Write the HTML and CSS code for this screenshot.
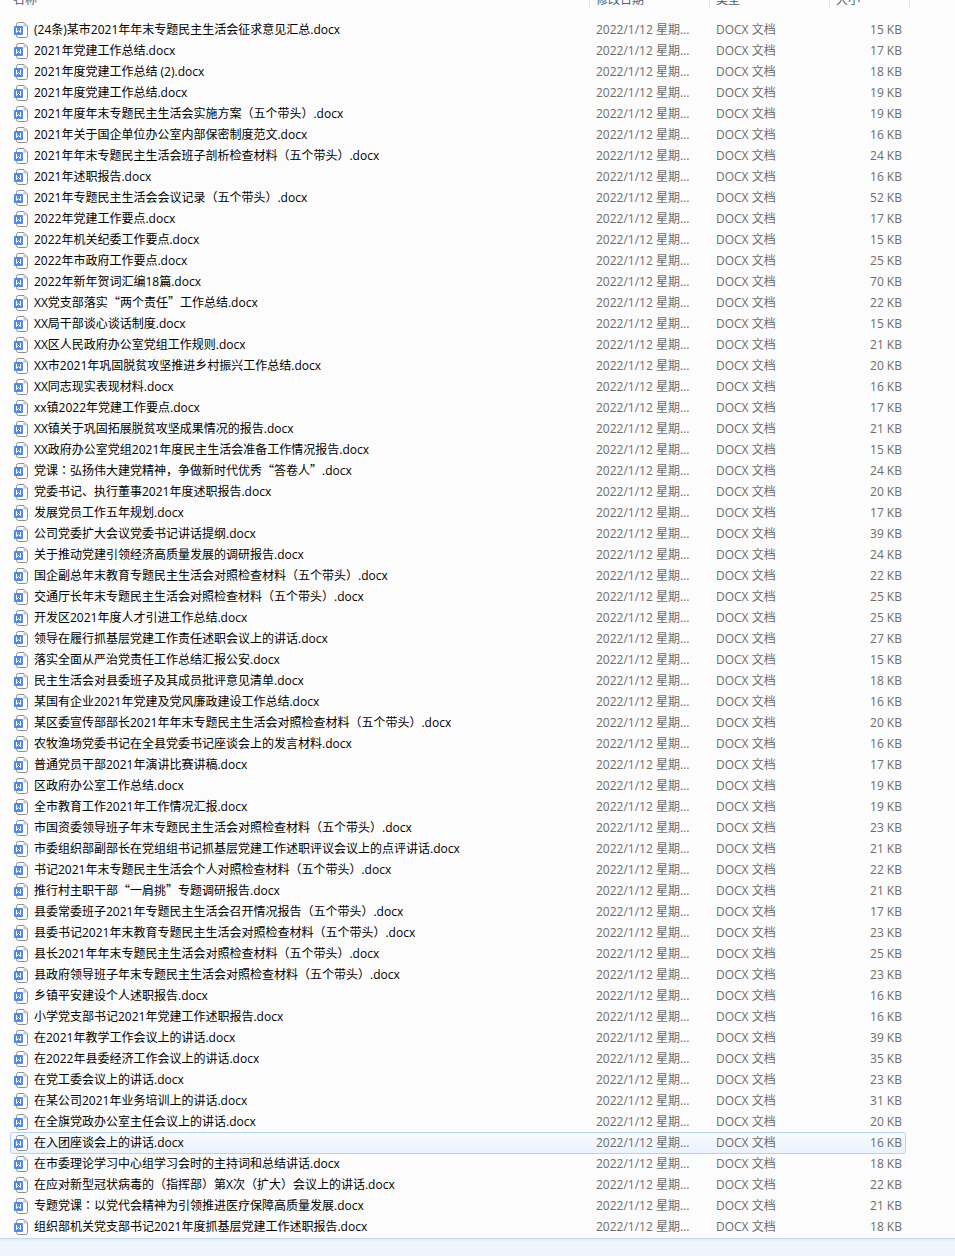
FILE: index.html
```html
<!DOCTYPE html>
<html lang="zh-CN">
<head>
  <meta charset="UTF-8">
  <meta name="viewport" content="width=device-width, initial-scale=1.0">
  <title>文件列表</title>
  <link rel="stylesheet" href="styles.css">
</head>
<body>
<svg class="sprite" aria-hidden="true">
  <symbol id="docx" viewBox="0 0 14 16">
    <path d="M4.500 .5H10L13.500 4v9.500a2 2 0 0 1-2 2h-7a2 2 0 0 1-2-2v-11a2 2 0 0 1 2-2z" fill="#fff" stroke="#8e8e8e"/>
    <path d="M9.500 1v3.500H13z" fill="#c4c4c4"/>
    <rect x="0" y="4" width="9" height="9" rx="1" fill="#4f8af0"/>
    <path d="M2.500 6v4.500L4.500 8.500l2 2V6" fill="none" stroke="#fff"/>
  </symbol>
</svg>
<main class="pane">
  <table class="files">
    <colgroup>
      <col>
      <col class="col-date">
      <col class="col-type">
      <col class="col-size">
      <col class="col-end">
    </colgroup>
    <thead>
      <tr>
        <th>名称</th>
        <th>修改日期</th>
        <th>类型</th>
        <th colspan="2">大小</th>
      </tr>
    </thead>
    <tbody id="rows"></tbody>
  </table>
</main>
<footer class="details"></footer>
<script src="script.js"></script>
</body>
</html>
```
FILE: styles.css
```css
:root {
  --bg: #fcfcfc;
  --text: #000;
  --muted: #6d6d6d;
  --head: #4c607a;
  --line: #dfe7f2;
}
* {
  box-sizing: border-box;
}
body {
  margin: 0;
  min-height: 100vh;
  display: flex;
  flex-direction: column;
  overflow: hidden;
  background: var(--bg);
  color: var(--text);
  font-family: "Open Sans", "Noto Sans CJK SC", sans-serif;
  font-size: 12px;
  line-height: 20px;
}
.sprite {
  display: none;
}
/* the header is scrolled partly out of view */
.pane {
  margin-top: -16px;
  padding: 0 45px 1px 10px;
}
.files {
  width: 100%;
  table-layout: fixed;
  border-collapse: separate;
  border-spacing: 0;
}
.col-date,
.col-type {
  width: 120px;
}
.col-size {
  width: 76px;
}
.col-end {
  width: 4px;
}
th {
  height: 35px;
  padding: 6px 6px 0;
  vertical-align: top;
  text-align: left;
  font-weight: normal;
  color: var(--head);
  background: linear-gradient(var(--line), var(--line)) right top / 1px 24px no-repeat;
}
th:first-child {
  padding-left: 3px;
}
td {
  height: 21px;
  padding: 0 6px;
  color: var(--muted);
  white-space: nowrap;
}
td.name {
  padding: 0 4px;
  color: var(--text);
}
td.size {
  padding: 0 4px;
  text-align: right;
}
td.end {
  padding: 0;
}
.file {
  display: flex;
  align-items: center;
  gap: 6px;
}
.icon {
  width: 14px;
  height: 16px;
  flex: none;
}
.quote {
  font-family: "Noto Sans CJK SC", sans-serif;
}
.colon {
  font-family: "Noto Sans CJK TC", sans-serif;
}
.selected {
  position: relative;
  z-index: 0;
}
.selected .name::before {
  content: "";
  position: absolute;
  inset: 0 4px -1px 0;
  z-index: -1;
  border: 1px solid #b4d3f8;
  border-radius: 3px;
  background: linear-gradient(#f9fbfe, #eaf2fd);
}
.details {
  flex: 1;
  border-top: 1px solid #c5d6ea;
  background: linear-gradient(#e4eaf5, #f0f4fc 3px);
}
```
FILE: script.js
```js
const files = [
  ['(24条)某市2021年年末专题民主生活会征求意见汇总', 15],
  ['2021年党建工作总结', 17],
  ['2021年度党建工作总结 (2)', 18],
  ['2021年度党建工作总结', 19],
  ['2021年度年末专题民主生活会实施方案（五个带头）', 19],
  ['2021年关于国企单位办公室内部保密制度范文', 16],
  ['2021年年末专题民主生活会班子剖析检查材料（五个带头）', 24],
  ['2021年述职报告', 16],
  ['2021年专题民主生活会会议记录（五个带头）', 52],
  ['2022年党建工作要点', 17],
  ['2022年机关纪委工作要点', 15],
  ['2022年市政府工作要点', 25],
  ['2022年新年贺词汇编18篇', 70],
  ['XX党支部落实“两个责任”工作总结', 22],
  ['XX局干部谈心谈话制度', 15],
  ['XX区人民政府办公室党组工作规则', 21],
  ['XX市2021年巩固脱贫攻坚推进乡村振兴工作总结', 20],
  ['XX同志现实表现材料', 16],
  ['xx镇2022年党建工作要点', 17],
  ['XX镇关于巩固拓展脱贫攻坚成果情况的报告', 21],
  ['XX政府办公室党组2021年度民主生活会准备工作情况报告', 15],
  ['党课：弘扬伟大建党精神，争做新时代优秀“答卷人”', 24],
  ['党委书记、执行董事2021年度述职报告', 20],
  ['发展党员工作五年规划', 17],
  ['公司党委扩大会议党委书记讲话提纲', 39],
  ['关于推动党建引领经济高质量发展的调研报告', 24],
  ['国企副总年末教育专题民主生活会对照检查材料（五个带头）', 22],
  ['交通厅长年末专题民主生活会对照检查材料（五个带头）', 25],
  ['开发区2021年度人才引进工作总结', 25],
  ['领导在履行抓基层党建工作责任述职会议上的讲话', 27],
  ['落实全面从严治党责任工作总结汇报公安', 15],
  ['民主生活会对县委班子及其成员批评意见清单', 18],
  ['某国有企业2021年党建及党风廉政建设工作总结', 16],
  ['某区委宣传部部长2021年年末专题民主生活会对照检查材料（五个带头）', 20],
  ['农牧渔场党委书记在全县党委书记座谈会上的发言材料', 16],
  ['普通党员干部2021年演讲比赛讲稿', 17],
  ['区政府办公室工作总结', 19],
  ['全市教育工作2021年工作情况汇报', 19],
  ['市国资委领导班子年末专题民主生活会对照检查材料（五个带头）', 23],
  ['市委组织部副部长在党组组书记抓基层党建工作述职评议会议上的点评讲话', 21],
  ['书记2021年末专题民主生活会个人对照检查材料（五个带头）', 22],
  ['推行村主职干部“一肩挑”专题调研报告', 21],
  ['县委常委班子2021年专题民主生活会召开情况报告（五个带头）', 17],
  ['县委书记2021年末教育专题民主生活会对照检查材料（五个带头）', 23],
  ['县长2021年年末专题民主生活会对照检查材料（五个带头）', 25],
  ['县政府领导班子年末专题民主生活会对照检查材料（五个带头）', 23],
  ['乡镇平安建设个人述职报告', 16],
  ['小学党支部书记2021年党建工作述职报告', 16],
  ['在2021年教学工作会议上的讲话', 39],
  ['在2022年县委经济工作会议上的讲话', 35],
  ['在党工委会议上的讲话', 23],
  ['在某公司2021年业务培训上的讲话', 31],
  ['在全旗党政办公室主任会议上的讲话', 20],
  ['在入团座谈会上的讲话', 16],
  ['在市委理论学习中心组学习会时的主持词和总结讲话', 18],
  ['在应对新型冠状病毒的（指挥部）第X次（扩大）会议上的讲话', 22],
  ['专题党课：以党代会精神为引领推进医疗保障高质量发展', 21],
  ['组织部机关党支部书记2021年度抓基层党建工作述职报告', 18]
];
const selected = 53;

// full-width quotes and the centred colon need a CJK face
function formatName(name) {
  return name
    .replace(/[“”]/g, m => `<span class="quote">${m}</span>`)
    .replace(/：/g, m => `<span class="colon" lang="zh-TW">${m}</span>`);
}

document.getElementById('rows').innerHTML = files.map(([name, size], i) => `
  <tr${i === selected ? ' class="selected"' : ''}>
    <td class="name"><div class="file"><svg class="icon" aria-hidden="true"><use href="#docx"/></svg><span>${formatName(name)}.docx</span></div></td>
    <td>2022/1/12 星期...</td>
    <td>DOCX 文档</td>
    <td class="size">${size} KB</td>
    <td class="end"></td>
  </tr>`).join('');
```
